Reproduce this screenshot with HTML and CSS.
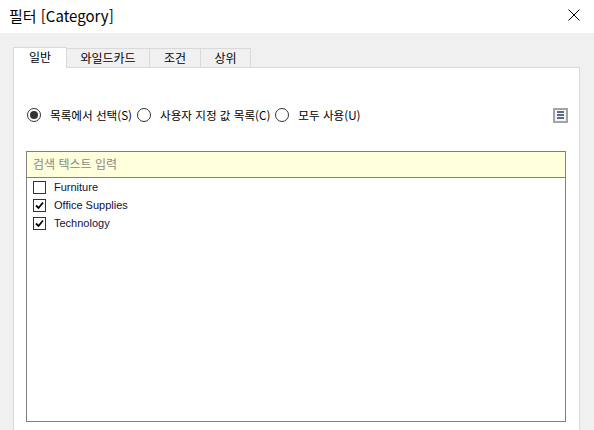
FILE: index.html
```html
<!DOCTYPE html>
<html lang="ko">
<head>
<meta charset="utf-8">
<link rel="stylesheet" href="styles.css">
</head>
<body>
<div class="titlebar">
  <span class="title">필터 [Category]</span>
  <svg class="close" width="12" height="12" viewBox="0 0 12 12"><path d="M0.5 0.5L11.5 11.5M11.5 0.5L0.5 11.5" stroke="#000" stroke-width="1" fill="none"/></svg>
</div>
<div class="content">
  <div class="tabs">
    <div class="tab active">일반</div>
    <div class="tab w1">와일드카드</div>
    <div class="tab w2">조건</div>
    <div class="tab w3">상위</div>
  </div>
  <div class="panel">
    <div class="radios">
      <label class="radio"><span class="dot on"></span>목록에서 선택(S)</label>
      <label class="radio"><span class="dot"></span>사용자 지정 값 목록(C)</label>
      <label class="radio"><span class="dot"></span>모두 사용(U)</label>
      <span class="menu"><i></i><i></i><i></i></span>
    </div>
    <div class="listbox">
      <div class="search">검색 텍스트 입력</div>
      <div class="items">
        <div class="item"><span class="cb"></span>Furniture</div>
        <div class="item"><span class="cb"><svg width="11" height="11" viewBox="0 0 11 11"><path d="M2 5.5L4.5 8L9 2.5" stroke="#000" stroke-width="1.8" fill="none"/></svg></span>Office Supplies</div>
        <div class="item"><span class="cb"><svg width="11" height="11" viewBox="0 0 11 11"><path d="M2 5.5L4.5 8L9 2.5" stroke="#000" stroke-width="1.8" fill="none"/></svg></span>Technology</div>
      </div>
    </div>
  </div>
</div>
</body>
</html>
```
FILE: styles.css
```css
html, body { margin: 0; padding: 0; }
body {
  width: 594px; height: 430px; overflow: hidden;
  background: #f0f0f0;
  font-family: "Noto Sans CJK KR", "Noto Sans", sans-serif;
  color: #000;
}
.titlebar {
  height: 33px; background: #fff;
  display: flex; align-items: center; justify-content: space-between;
  padding: 0 14px 0 9px; box-sizing: border-box;
}
.title { font-size: 15px; line-height: 20px; margin-top: -2px; font-family: "Noto Sans CJK KR", sans-serif; }
.close { margin-top: -3px; }
.content { padding: 14px 0 0 13px; }
.tabs { display: flex; align-items: flex-end; height: 20px; position: relative; z-index: 1; }
.tab {
  box-sizing: border-box; height: 19px;
  border: 1px solid #d9d9d9; border-bottom: none; border-left: none;
  background: #f0f0f0; font-size: 12px; line-height: 16px;
  text-align: center; padding-top: 1px;
}
.tab.active { width: 54px; height: 21px; background: #fff; border-left: 1px solid #d9d9d9; margin-bottom: -1px; }
.tab.w1 { width: 83px; }
.tab.w2 { width: 51px; }
.tab.w3 { width: 50px; }
.panel {
  width: 567px; height: 363px; box-sizing: border-box;
  background: #fff; border: 1px solid #d9d9d9; border-bottom: none;
  padding: 39px 12px 0 12px;
}
.radios { display: flex; align-items: center; height: 16px; font-size: 11.6px; }
.radio { display: flex; align-items: center; margin-right: 5px; white-space: nowrap; }
.dot {
  width: 12px; height: 12px; border: 1px solid #333; border-radius: 50%;
  margin-right: 9px; box-sizing: content-box; position: relative; background: #fff;
}
.dot.on::after {
  content: ""; position: absolute; left: 2px; top: 2px; width: 8px; height: 8px;
  border-radius: 50%; background: #333;
}
.radio:first-child .dot { margin-left: 1px; }
.menu {
  margin-left: auto; width: 11px; height: 11px; border: 2px solid #a3a3a3;
  background: #f4f4f4; display: flex; flex-direction: column; justify-content: center;
  align-items: center; gap: 1px; margin-right: -1px;
}
.menu i { display: block; width: 7px; height: 2px; background: #5b6b82; }
.listbox {
  margin-top: 28px; width: 540px; height: 271px; box-sizing: border-box;
  border: 1px solid #808080;
}
.search {
  height: 25px; background: #ffffdc; border-bottom: 1px solid #808080;
  box-sizing: content-box; font-size: 12px; color: #888; padding-left: 6px;
  line-height: 24px;
}
.items { padding-top: 0; }
.item {
  display: flex; align-items: center; height: 18px;
  font-family: "Liberation Sans", Arial, sans-serif; font-size: 11px; color: #101040;
  padding-left: 6px;
}
.cb {
  width: 11px; height: 11px; border: 1px solid #333; margin-right: 8px;
  display: flex; align-items: center; justify-content: center; background: #fff;
}
```
